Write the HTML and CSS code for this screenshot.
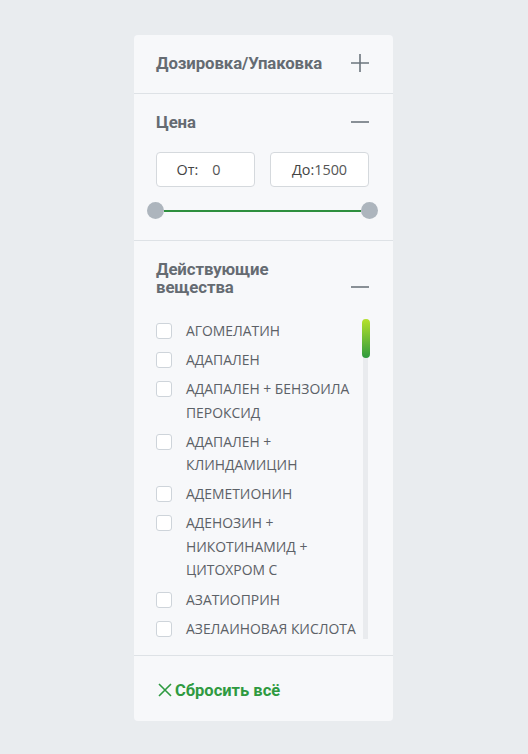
FILE: index.html
```html
<!DOCTYPE html>
<html lang="ru">
<head>
<meta charset="utf-8">
<link rel="stylesheet" href="styles.css">
</head>
<body>
<div class="card">
  <section class="sec sec-dose">
    <div class="sec-head">
      <h3 class="title">Дозировка/Упаковка</h3>
      <svg class="toggle" width="18" height="18" viewBox="0 0 18 18"><path d="M9 0V18M0 9H18" stroke="#6c757d" stroke-width="1.6" fill="none"/></svg>
    </div>
  </section>
  <section class="sec sec-price">
    <div class="sec-head">
      <h3 class="title">Цена</h3>
      <svg class="toggle" width="18" height="18" viewBox="0 0 18 18"><path d="M0 9H18" stroke="#6c757d" stroke-width="1.6" fill="none"/></svg>
    </div>
    <div class="inputs">
      <div class="inp"><span class="lbl">От:</span><span class="val val-from">0</span></div>
      <div class="inp"><span class="lbl">До:</span><span class="val">1500</span></div>
    </div>
    <div class="slider">
      <span class="knob"></span>
      <span class="track"></span>
      <span class="knob"></span>
    </div>
  </section>
  <section class="sec sec-subst">
    <div class="sec-head sec-head-bottom">
      <h3 class="title">Действующие<br>вещества</h3>
      <svg class="toggle" width="18" height="18" viewBox="0 0 18 18"><path d="M0 9H18" stroke="#6c757d" stroke-width="1.6" fill="none"/></svg>
    </div>
    <div class="list-wrap">
      <ul class="list">
        <li><span class="cb"></span><span class="txt">АГОМЕЛАТИН</span></li>
        <li><span class="cb"></span><span class="txt">АДАПАЛЕН</span></li>
        <li><span class="cb"></span><span class="txt">АДАПАЛЕН + БЕНЗОИЛА ПЕРОКСИД</span></li>
        <li><span class="cb"></span><span class="txt">АДАПАЛЕН + КЛИНДАМИЦИН</span></li>
        <li><span class="cb"></span><span class="txt">АДЕМЕТИОНИН</span></li>
        <li><span class="cb"></span><span class="txt">АДЕНОЗИН + НИКОТИНАМИД + ЦИТОХРОМ С</span></li>
        <li><span class="cb"></span><span class="txt">АЗАТИОПРИН</span></li>
        <li><span class="cb"></span><span class="txt">АЗЕЛАИНОВАЯ КИСЛОТА</span></li>
      </ul>
      <div class="scroll"><div class="thumb"></div></div>
    </div>
  </section>
  <div class="reset">
    <svg width="16" height="16" viewBox="0 0 16 16"><path d="M2 2L14 14M14 2L2 14" stroke="#2e9a40" stroke-width="1.6" fill="none"/></svg>
    <span>Сбросить всё</span>
  </div>
</div>
</body>
</html>
```
FILE: styles.css
```css
* { box-sizing: border-box; }
html, body { margin: 0; padding: 0; }
body {
  background: #e9ecef;
  width: 528px;
  height: 754px;
  padding-top: 35px;
  font-family: "Open Sans", sans-serif;
}
.card {
  width: 259px;
  margin-left: 134px;
  height: 686px;
  background: #f7f8fa;
  border-radius: 4px;
  display: flex;
  flex-direction: column;
}
.sec { border-bottom: 1px solid #dee2e6; padding: 0 22px; }
.sec-dose { height: 59px; padding-top: 19px; }
.sec-head { display: flex; justify-content: space-between; align-items: center; }
.sec-head-bottom { align-items: flex-end; }
.title {
  margin: 0;
  font-family: Roboto, sans-serif;
  font-weight: 700;
  font-size: 16.8px;
  line-height: 18px;
  color: #656b72;
  letter-spacing: -0.1px;
}
.toggle { display: block; margin-right: 2px; }
.sec-price { height: 147px; padding-top: 19px; }
.inputs { display: flex; gap: 15px; margin-top: 21px; }
.inp {
  width: 99px;
  height: 35px;
  background: #fff;
  border: 1px solid #d5d9dd;
  border-radius: 4px;
  display: flex;
  align-items: center;
  justify-content: center;
  font-size: 14.4px;
  color: #444;
}
.val-from { margin-left: 14px; margin-right: 14px; }
.inp .val { color: #555; }
.slider {
  display: flex;
  align-items: center;
  margin-top: 15px;
  margin-left: -9px;
  margin-right: -7px;
}
.knob { width: 17px; height: 17px; border-radius: 50%; background: #adb5bd; flex: none; }
.track { flex: 1; height: 2px; background: #2e8f3e; }
.sec-subst { flex: 1; padding-top: 19px; padding-right: 22px; }
.list-wrap { display: flex; margin-top: 23px; height: 320px; }
.list { list-style: none; margin: 0; padding: 0; flex: 1; overflow: hidden; }
.list li { display: flex; align-items: flex-start; margin-bottom: 5.6px; }
.cb {
  width: 16px; height: 16px;
  border: 1px solid #ced4da;
  border-radius: 3px;
  background: #fff;
  flex: none;
  margin-top: 4px;
  margin-right: 14px;
}
.txt {
  font-size: 13.9px;
  line-height: 23.5px;
  color: #5c6167;
  letter-spacing: 0;
}
.scroll {
  width: 5px;
  margin-left: 2px;
  margin-right: 3px;
  background: #e9ebee;
  position: relative;
}
.thumb {
  position: absolute;
  left: -1px;
  top: 0;
  width: 8px;
  height: 39px;
  border-radius: 4px;
  background: linear-gradient(#b6e22a, #2e9a3e);
}
.reset {
  height: 65px;
  display: flex;
  align-items: center;
  gap: 2px;
  padding-left: 23px;
  padding-top: 3px;
  color: #2e9a40;
  font-family: Roboto, sans-serif;
  font-weight: 700;
  font-size: 16.5px;
}
```
